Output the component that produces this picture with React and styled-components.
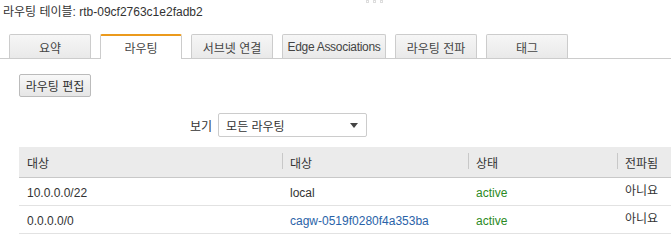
import React from "react";
import styled, { createGlobalStyle } from "styled-components";

const GlobalStyle = createGlobalStyle`
  body {
    margin: 0;
    background: #fff;
    font-family: "Liberation Sans", Arial, "Noto Sans CJK KR", sans-serif;
    font-size: 12px;
    color: #333;
    overflow: hidden;
  }
`;

const Page = styled.div`
  width: 671px;
  height: 241px;
  overflow: hidden;
  position: relative;
`;

const Grip = styled.div`
  position: absolute;
  top: 0;
  left: 366px;
  display: flex;
  gap: 4px;
`;

const GripDot = styled.span`
  width: 3px;
  height: 3px;
  border: 1px solid #ddd;
  box-sizing: border-box;
`;

const Header = styled.div`
  padding: 5px 0 0 3px;
  height: 15px;
  line-height: 15px;
  color: #333;
`;

const Tabs = styled.div`
  display: flex;
  gap: 9px;
  margin-top: 14px;
  padding-left: 9px;
  border-bottom: 1px solid #ccc;
  height: 24px;
`;

const Tab = styled.div`
  width: ${(p) => p.$width || 82}px;
  height: ${(p) => (p.$active ? 25 : 24)}px;
  box-sizing: border-box;
  display: flex;
  align-items: center;
  justify-content: center;
  border: 1px solid #ccc;
  border-bottom: none;
  border-top: ${(p) => (p.$active ? "2px solid #eb9a1c" : "1px solid #ccc")};
  border-radius: 2px 2px 0 0;
  background: ${(p) =>
    p.$active ? "#fff" : "linear-gradient(#f6f6f6, #e9e9e9)"};
  color: #444;
  padding-top: ${(p) => (p.$active ? 0 : 1)}px;
  letter-spacing: ${(p) => (p.$tight ? "-0.3px" : "0")};
`;

const Content = styled.div`
  padding-left: 19px;
`;

const Button = styled.button`
  margin-top: 15px;
  width: 72px;
  height: 23px;
  border: 1px solid #bbb;
  border-radius: 2px;
  background: linear-gradient(#f8f8f8, #e6e6e6);
  font: inherit;
  color: #333;
  padding: 0;
  display: block;
`;

const FilterRow = styled.div`
  display: flex;
  align-items: center;
  gap: 6px;
  margin-top: 16px;
  padding-left: 171px;
`;

const FilterLabel = styled.span`
  color: #333;
`;

const Select = styled.div`
  width: 149px;
  height: 24px;
  box-sizing: border-box;
  border: 1px solid #ccc;
  border-radius: 2px;
  display: flex;
  align-items: center;
  justify-content: space-between;
  padding: 0 8px 0 7px;
  color: #333;
`;

const Caret = styled.span`
  width: 0;
  height: 0;
  border-left: 4px solid transparent;
  border-right: 4px solid transparent;
  border-top: 5px solid #444;
`;

const Table = styled.div`
  margin-top: 10px;
  width: 652px;
`;

const Row = styled.div`
  display: grid;
  grid-template-columns: 263px 186px 149px 1fr;
  height: ${(p) => (p.$head ? 30 : 27)}px;
  align-items: center;
  background: ${(p) => (p.$head ? "#ebebeb" : "#fff")};
  border-bottom: 1px solid ${(p) => (p.$head ? "#c8c8c8" : "#e2e2e2")};
`;

const HeadCell = styled.div`
  position: relative;
  padding-left: 8px;
  color: #333;
  &::before {
    content: "";
    display: ${(p) => (p.$first ? "none" : "block")};
    position: absolute;
    left: 0;
    top: -1px;
    height: 16px;
    border-left: 1px solid #c8c8c8;
  }
`;

const Cell = styled.div`
  padding-left: 8px;
  color: ${(p) =>
    p.$tone === "link" ? "#2a63a8" : p.$tone === "ok" ? "#2c8a24" : "#333"};
  padding-top: ${(p) => (p.$lift ? 0 : 2)}px;
  margin-top: ${(p) => (p.$lift ? -4 : 0)}px;
`;

const routes = [
  { dest: "10.0.0.0/22", target: "local", link: false },
  { dest: "0.0.0.0/0", target: "cagw-0519f0280f4a353ba", link: true },
];

const tabs = [
  { label: "요약" },
  { label: "라우팅", active: true },
  { label: "서브넷 연결" },
  { label: "Edge Associations", width: 104, tight: true },
  { label: "라우팅 전파" },
  { label: "태그" },
];

export default function App() {
  return (
    <Page>
      <GlobalStyle />
      <Grip>
        <GripDot />
        <GripDot />
        <GripDot />
      </Grip>
      <Header>라우팅 테이블: rtb-09cf2763c1e2fadb2</Header>
      <Tabs>
        {tabs.map((t) => (
          <Tab
            key={t.label}
            $active={t.active}
            $width={t.width}
            $tight={t.tight}
          >
            {t.label}
          </Tab>
        ))}
      </Tabs>
      <Content>
        <Button>라우팅 편집</Button>
        <FilterRow>
          <FilterLabel>보기</FilterLabel>
          <Select>
            모든 라우팅
            <Caret />
          </Select>
        </FilterRow>
        <Table>
          <Row $head>
            <HeadCell $first>대상</HeadCell>
            <HeadCell>대상</HeadCell>
            <HeadCell>상태</HeadCell>
            <HeadCell>전파됨</HeadCell>
          </Row>
          {routes.map((r) => (
            <Row key={r.dest}>
              <Cell>{r.dest}</Cell>
              <Cell $tone={r.link ? "link" : undefined}>{r.target}</Cell>
              <Cell $tone="ok">active</Cell>
              <Cell $lift>아니요</Cell>
            </Row>
          ))}
        </Table>
      </Content>
    </Page>
  );
}
